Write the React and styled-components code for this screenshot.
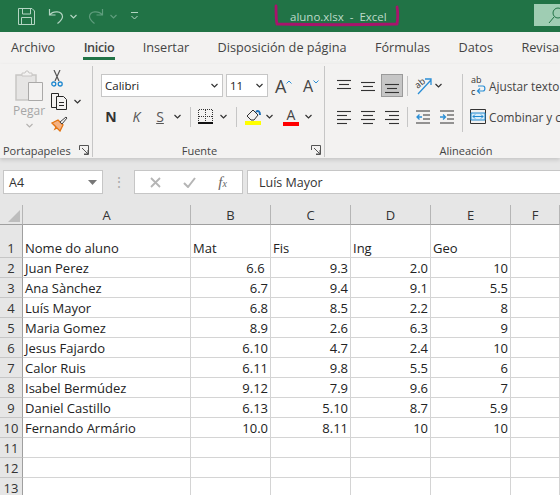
import styled, { createGlobalStyle } from "styled-components";

const GlobalStyle = createGlobalStyle`
  html, body { margin: 0; padding: 0; background: #fff; }
  body { font-family: "Open Sans", "Liberation Sans", sans-serif; }
`;

const students = [
  ["Juan Perez", "6.6\u00a0", "9.3", "2.0", "10"],
  ["Ana Sànchez", "6.7", "9.4", "9.1", "5.5"],
  ["Luís Mayor", "6.8", "8.5", "2.2", "8"],
  ["Maria Gomez", "8.9", "2.6", "6.3", "9"],
  ["Jesus Fajardo", "6.10", "4.7", "2.4", "10"],
  ["Calor Ruis", "6.11", "9.8", "5.5", "6"],
  ["Isabel Bermúdez", "9.12", "7.9", "9.6", "7"],
  ["Daniel Castillo", "6.13", "5.10", "8.7", "5.9"],
  ["Fernando Armário", "10.0", "8.11", "10", "10"],
];

const App = () => (
  <Page>
    <GlobalStyle />
    <TitleBar>
      <QuickAccess>
        <svg width="17" height="17" viewBox="0 0 17 17" fill="none" stroke="#b4d5c3">
          <path d="M.5.5h13.5l2.5 2.5v13.5H.5z" />
          <path d="M4.5.5v5.500h8V.5M3.500 16.500V9.500h10v7" />
        </svg>
        <svg width="16" height="16" viewBox="0 0 16 16" fill="none" stroke="#b4d5c3" style={{ marginLeft: 13 }}>
          <path d="M1.500 1v6h6M1.500 7C5 2.500 14 2.500 14.500 8.500 14.500 11 12 13.500 9.500 15.500" strokeWidth="1.200" />
        </svg>
        <Chevron color="#b4d5c3" style={{ marginLeft: 6 }} />
        <svg width="16" height="16" viewBox="0 0 16 16" fill="none" stroke="#5f9d7d" style={{ marginLeft: 11 }}>
          <path d="M14.500 1v6h-6M14.500 7C11 2.500 2 2.500 1.500 8.500 1.500 11 4 13.500 6.500 15.500" strokeWidth="1.200" />
        </svg>
        <Chevron color="#5f9d7d" style={{ marginLeft: 6 }} />
        <svg width="8" height="9" viewBox="0 0 8 9" fill="none" stroke="#b4d5c3" style={{ marginLeft: 14 }}>
          <path d="M0 .5h7M.5 4l3 3 3-3" />
        </svg>
      </QuickAccess>
      <FileTitle>aluno.xlsx&nbsp; - &nbsp;Excel</FileTitle>
      <SearchBox>
        <svg width="12" height="18" viewBox="0 0 12 18" fill="none" stroke="#217346">
          <circle cx="10" cy="7" r="5" />
          <path d="M6 11l-5 6" />
        </svg>
      </SearchBox>
      <TitleMark width="128" height="24" viewBox="0 0 128 24" fill="none">
        <path d="M2 2c0 8 0 14 1 18 40 1 80 1 120 0 1-6 1-12 0-17" stroke="#a8146c" strokeWidth="2.800" strokeLinecap="round" />
      </TitleMark>
    </TitleBar>

    <Tabs>
      <Tab>Archivo</Tab>
      <Tab $active>Inicio</Tab>
      <Tab>Insertar</Tab>
      <Tab>Disposición de página</Tab>
      <Tab>Fórmulas</Tab>
      <Tab>Datos</Tab>
      <Tab>Revisar</Tab>
    </Tabs>

    <Ribbon>
      <Group $width={93}>
        <ClipboardBody>
          <PasteColumn>
            <svg width="28" height="31" viewBox="0 0 28 31" fill="none">
              <path d="M1 5h20v25H1z" fill="#e6e5e4" stroke="#c8c6c4" strokeWidth="1.500" />
              <path d="M7 6V3h3l1-2h2l1 2h3v3z" fill="#f3f2f1" stroke="#c8c6c4" />
              <path d="M13.500 12.500h14v18h-14z" fill="#f3f2f1" stroke="#aaa9a8" />
            </svg>
            <PasteLabel>Pegar</PasteLabel>
            <Chevron color="#b5b3b1" />
          </PasteColumn>
          <ClipboardTools>
            <svg width="12" height="17" viewBox="0 0 12 17" fill="none">
              <path d="M3 0l5 11M9 0L4 11" stroke="#555" strokeWidth="1.200" />
              <circle cx="2.800" cy="14" r="2" stroke="#1e88d0" strokeWidth="1.300" />
              <circle cx="9.200" cy="14" r="2" stroke="#1e88d0" strokeWidth="1.300" />
            </svg>
            <CopyRow>
              <svg width="17" height="17" viewBox="0 0 17 17" fill="#f3f2f1" stroke="#262626">
                <path d="M.5.5h7v14h-7z" />
                <path d="M5.500 3.500h7l3 3v10h-10z" />
                <path d="M8 9.500h5M8 12.500h5" />
              </svg>
              <Chevron />
            </CopyRow>
            <svg width="17" height="16" viewBox="0 0 17 16" fill="none">
              <path d="M1 7l6-3 5 5-3 6-3-3-2 1 1-2z" fill="#f4b183" stroke="#e3730f" strokeWidth="1.300" />
              <path d="M9 6l6-5 1 1-5 6z" fill="#f3f2f1" stroke="#444" />
            </svg>
          </ClipboardTools>
        </ClipboardBody>
        <GroupFooter>
          <GroupLabel $left>Portapapeles</GroupLabel>
          <Launcher />
        </GroupFooter>
      </Group>

      <Group $width={232}>
        <ToolRows>
          <ToolRow>
            <ComboBox $width={122}>
              Calibri
              <Chevron />
            </ComboBox>
            <ComboBox $width={42}>
              11
              <Chevron />
            </ComboBox>
            <SizeButton $large>
              A
              <svg width="6" height="4" viewBox="0 0 6 4" fill="none" stroke="#2b8fd6">
                <path d="M.5 3.500L3 1l2.500 2.500" />
              </svg>
            </SizeButton>
            <SizeButton>
              A
              <svg width="6" height="4" viewBox="0 0 6 4" fill="none" stroke="#2b8fd6">
                <path d="M.5.500L3 3 5.500.5" />
              </svg>
            </SizeButton>
          </ToolRow>
          <FormatRow>
            <StyleLetter $width={30} $weight={700}>N</StyleLetter>
            <StyleLetter $width={21} $italic>K</StyleLetter>
            <StyleLetter $width={26} $underline>S</StyleLetter>
            <ChevronSlot $width={8}><Chevron /></ChevronSlot>
            <Divider $left={9} $right={3} />
            <IconSlot>
              <svg width="15" height="15" viewBox="0 0 15 15" fill="none" stroke="#333" shapeRendering="crispEdges">
                <path d="M.5.500h14M.5.500v13M14.500.500v13M7.500.500v13M.5 7h14" strokeDasharray="1 1" />
                <path d="M0 14h15" stroke="#111" strokeWidth="1.500" />
              </svg>
            </IconSlot>
            <ChevronSlot $width={14}><Chevron /></ChevronSlot>
            <Divider $left={6} $right={4} />
            <IconSlot $width={24}>
              <ColorTool>
                <svg width="15" height="12" viewBox="0 0 15 12" fill="none">
                  <path d="M1 7l6-6 5 5-4 5H5z" fill="#f3f2f1" stroke="#333" />
                  <path d="M10 3c2-2 4-1 4 3" stroke="#1c6fb8" strokeWidth="2" />
                </svg>
                <ColorBar $color="#ffff00" />
              </ColorTool>
            </IconSlot>
            <ChevronSlot $width={8} $after={6}><Chevron /></ChevronSlot>
            <IconSlot $width={24}>
              <ColorTool>
                <FontColorLetter>A</FontColorLetter>
                <ColorBar $color="#ff0000" />
              </ColorTool>
            </IconSlot>
            <ChevronSlot $width={10}><Chevron /></ChevronSlot>
          </FormatRow>
        </ToolRows>
        <GroupFooter>
          <GroupLabel $shift={9}>Fuente</GroupLabel>
          <Launcher />
        </GroupFooter>
      </Group>

      <Group $width={280} $plain>
        <AlignBody>
          <AlignGrid>
            <AlignButton><Lines rows={[[0, 14, 2], [2, 12, 6], [0, 14, 10]]} /></AlignButton>
            <AlignButton><Lines rows={[[0, 14, 4], [2, 12, 8], [0, 14, 12]]} /></AlignButton>
            <AlignButton $selected><Lines rows={[[0, 14, 6], [2, 12, 10], [0, 14, 14]]} /></AlignButton>
            <AlignDivider />
            <OrientationCell>
              <svg width="18" height="18" viewBox="0 0 18 18" fill="none">
                <text x="1" y="9" fontSize="9" fill="#333" fontFamily="Open Sans" transform="rotate(-40 6 8)">ab</text>
                <path d="M3 17L16 3M10 2h6v6" stroke="#2b8fd6" strokeWidth="1.300" />
              </svg>
              <Chevron />
            </OrientationCell>
            <AlignButton><Lines rows={[[0, 14, 2], [0, 10, 6], [0, 14, 10], [0, 10, 14]]} /></AlignButton>
            <AlignButton><Lines rows={[[0, 14, 2], [2, 12, 6], [0, 14, 10], [2, 12, 14]]} /></AlignButton>
            <AlignButton><Lines rows={[[0, 14, 2], [4, 14, 6], [0, 14, 10], [4, 14, 14]]} /></AlignButton>
            <AlignDivider />
            <IndentCell>
              <svg width="14" height="14" viewBox="0 0 14 14" fill="none">
                <path d="M0 1h14M7 5h7M7 9h7M0 13h14" stroke="#333" />
                <path d="M1 7h5M3.500 4.500L1 7l2.500 2.500" stroke="#2b8fd6" strokeWidth="1.300" />
              </svg>
              <svg width="14" height="14" viewBox="0 0 14 14" fill="none">
                <path d="M0 1h14M7 5h7M7 9h7M0 13h14" stroke="#333" />
                <path d="M0 7h5M3 4.500L5.500 7 3 9.500" stroke="#2b8fd6" strokeWidth="1.300" />
              </svg>
            </IndentCell>
          </AlignGrid>
          <Divider $tall />
          <WrapColumn>
            <WrapRow>
              <WrapIcon>
                <svg width="16" height="22" viewBox="0 0 16 22" fill="none">
                  <text x="1" y="8" fontSize="9" fill="#333" fontFamily="Open Sans">ab</text>
                  <text x="1" y="20" fontSize="9" fill="#333" fontFamily="Open Sans">c</text>
                  <path d="M8 16h5c2.500 0 2.500-5 0-5H8M10 13.500L7.500 16l2.500 2.500" stroke="#2b8fd6" strokeWidth="1.200" />
                </svg>
              </WrapIcon>
              Ajustar texto
            </WrapRow>
            <WrapRow>
              <WrapIcon>
                <svg width="16" height="15" viewBox="0 0 16 15" fill="none">
                  <path d="M.5.500h15v14H.5z" fill="#f3f2f1" stroke="#333" />
                  <path d="M1 4h14v7H1z" fill="#d9ecf8" stroke="#1e88d0" />
                  <path d="M3 7.500h10M5 5.500l-2 2 2 2M11 5.500l2 2-2 2" stroke="#1e88d0" />
                </svg>
              </WrapIcon>
              Combinar y centrar
            </WrapRow>
          </WrapColumn>
        </AlignBody>
        <GroupFooter $plain>
          <GroupLabel>Alineación</GroupLabel>
        </GroupFooter>
      </Group>
    </Ribbon>

    <FormulaBar>
      <NameBox>
        A4
        <svg width="9" height="5" viewBox="0 0 9 5" fill="#777"><path d="M0 0h9L4.500 5z" /></svg>
      </NameBox>
      <Grip>⋮</Grip>
      <FxBox>
        <svg width="11" height="11" viewBox="0 0 11 11" fill="none" stroke="#b5b5b5" strokeWidth="1.800">
          <path d="M1 1l9 9M10 1l-9 9" />
        </svg>
        <svg width="13" height="11" viewBox="0 0 13 11" fill="none" stroke="#b5b5b5" strokeWidth="2">
          <path d="M1 6l4 4 7-9" />
        </svg>
        <FxFunction><i>f</i><small><i>x</i></small></FxFunction>
      </FxBox>
      <FormulaInput>Luís Mayor</FormulaInput>
    </FormulaBar>

    <Sheet>
      <Corner>
        <svg width="12" height="12" viewBox="0 0 12 12" fill="#bdbdbd"><path d="M12 0v12H0z" /></svg>
      </Corner>
      {["A", "B", "C", "D", "E", "F"].map((letter) => (
        <ColumnHead key={letter}>{letter}</ColumnHead>
      ))}

      <RowHead>1</RowHead>
      <Cell>Nome do aluno</Cell>
      <Cell>Mat</Cell>
      <Cell>Fis</Cell>
      <Cell>Ing</Cell>
      <Cell>Geo</Cell>
      <Cell />

      {students.map((row, i) => (
        <SheetRow key={row[0]} number={i + 2} values={row} />
      ))}
      {[11, 12, 13].map((n) => (
        <SheetRow key={n} number={n} values={["", "", "", "", ""]} />
      ))}
    </Sheet>
  </Page>
);

const SheetRow = ({ number, values }) => (
  <>
    <RowHead>{number}</RowHead>
    {values.map((value, i) => (
      <Cell key={i} $number={i > 0}>{value}</Cell>
    ))}
    <Cell />
  </>
);

const Chevron = ({ color = "#333", style }) => (
  <svg width="7" height="5" viewBox="0 0 7 5" fill="none" stroke={color} strokeWidth="1.200" style={style}>
    <path d="M.5 1l3 3 3-3" />
  </svg>
);

const Launcher = () => (
  <LauncherIcon width="10" height="10" viewBox="0 0 10 10" fill="none" stroke="#555">
    <path d="M.5 5V.5h9v9H5M3 3l6 6M9 5v4H5" />
  </LauncherIcon>
);

const Lines = ({ rows }) => (
  <svg width="14" height="16" viewBox="0 0 14 16" stroke="#333" strokeWidth="1.100">
    {rows.map(([x1, x2, y]) => (
      <path key={y} d={`M${x1} ${y + 0.5}H${x2}`} />
    ))}
  </svg>
);

export default App;

const Page = styled.div`
  width: 560px;
  height: 495px;
  overflow: hidden;
  display: flex;
  flex-direction: column;
  background: #e6e6e6;
`;

const TitleBar = styled.header`
  position: relative;
  height: 32px;
  flex: none;
  display: flex;
  align-items: center;
  background: #217346;
  padding-left: 18px;
`;

const QuickAccess = styled.div`
  display: flex;
  align-items: center;
`;

const FileTitle = styled.div`
  margin-left: 151px;
  color: #bcdac9;
  font-size: 11.500px;
  white-space: nowrap;
`;

const SearchBox = styled.div`
  position: absolute;
  right: 0;
  top: 4px;
  width: 26px;
  height: 22px;
  background: #9fcdb3;
  display: flex;
  justify-content: flex-end;
  align-items: center;
`;

const TitleMark = styled.svg`
  position: absolute;
  left: 274px;
  top: 4px;
`;

const Tabs = styled.nav`
  height: 32px;
  flex: none;
  display: flex;
  gap: 28.400px;
  padding-left: 11px;
  background: #f3f2f1;
  white-space: nowrap;
`;

const Tab = styled.div`
  position: relative;
  line-height: 31px;
  font-size: 12.700px;
  font-weight: ${(p) => (p.$active ? 600 : 400)};
  letter-spacing: ${(p) => (p.$active ? "-0.4px" : "0")};
  color: #444;
  ${(p) =>
    p.$active &&
    `&::after {
      content: "";
      position: absolute;
      left: -1px;
      right: -1px;
      bottom: 4px;
      height: 3px;
      background: #217346;
    }`}
`;

const Ribbon = styled.section`
  height: 94px;
  flex: none;
  display: flex;
  padding-top: 2px;
  box-sizing: border-box;
  background: #f3f2f1;
  box-shadow: 0 2px 4px rgba(0, 0, 0, 0.14);
  position: relative;
  font-size: 12px;
  color: #444;
`;

const Group = styled.div`
  flex: none;
  width: ${(p) => p.$width}px;
  height: 91px;
  box-sizing: border-box;
  display: flex;
  flex-direction: column;
  border-right: ${(p) => (p.$plain ? "none" : "1px solid #c6c6c6")};
`;

const GroupFooter = styled.div`
  margin-top: auto;
  height: 14px;
  display: flex;
  align-items: center;
  justify-content: ${(p) => (p.$plain ? "center" : "space-between")};
  padding: 0 1px 0 3px;
`;

const GroupLabel = styled.span`
  font-size: 11px;
  color: #444;
  margin: ${(p) => (p.$left ? "0 auto 0 0" : `0 auto`)};
  position: relative;
  left: ${(p) => (p.$shift ? -p.$shift + 5 : 0)}px;
  white-space: nowrap;
`;

const LauncherIcon = styled.svg`
  flex: none;
  margin: 0 2px 0 0;
`;

const ClipboardBody = styled.div`
  display: flex;
  padding: 4px 0 0 15px;
`;

const PasteColumn = styled.div`
  width: 28px;
  display: flex;
  flex-direction: column;
  align-items: center;
  gap: 4px;
`;

const PasteLabel = styled.span`
  color: #a6a6a6;
  font-size: 12px;
  line-height: 16px;
  margin-top: -2px;
`;

const ClipboardTools = styled.div`
  margin-left: 8px;
  display: flex;
  flex-direction: column;
  align-items: flex-start;
  gap: 6px;
`;

const CopyRow = styled.div`
  display: flex;
  align-items: center;
  gap: 6px;
`;

const ToolRows = styled.div`
  display: flex;
  flex-direction: column;
  gap: 8px;
  padding-top: 8px;
`;

const ToolRow = styled.div`
  height: 23px;
  display: flex;
  align-items: center;
  gap: 3px;
  padding-left: 8px;
`;

const FormatRow = styled.div`
  height: 23px;
  display: flex;
  align-items: center;
  padding-left: 3px;
`;

const ComboBox = styled.div`
  width: ${(p) => p.$width}px;
  height: 23px;
  box-sizing: border-box;
  border: 1px solid #c6c6c6;
  background: #fff;
  padding: 0 4px 0 3px;
  display: flex;
  align-items: center;
  justify-content: space-between;
  color: #222;
  font-size: 11.500px;
`;

const SizeButton = styled.div`
  width: ${(p) => (p.$large ? 25 : 24)}px;
  display: flex;
  padding-left: 4px;
  box-sizing: border-box;
  font-size: ${(p) => (p.$large ? 18 : 16)}px;
  line-height: 22px;
  color: #444;
  svg { margin-top: 5px; flex: none; }
`;

const StyleLetter = styled.div`
  width: ${(p) => p.$width}px;
  text-align: center;
  font-size: 14px;
  color: ${(p) => (p.$weight ? "#333" : "#555")};
  font-weight: ${(p) => p.$weight || 400};
  font-style: ${(p) => (p.$italic ? "italic" : "normal")};
  text-decoration: ${(p) => (p.$underline ? "underline" : "none")};
`;

const ChevronSlot = styled.div`
  flex: none;
  width: ${(p) => p.$width}px;
  margin-right: ${(p) => p.$after || 0}px;
  display: flex;
  justify-content: center;
`;

const Divider = styled.div`
  flex: none;
  width: 1px;
  height: ${(p) => (p.$tall ? 58 : 20)}px;
  background: #c6c6c6;
  margin: 0 ${(p) => p.$right || 0}px 0 ${(p) => p.$left || 0}px;
`;

const IconSlot = styled.div`
  flex: none;
  width: ${(p) => p.$width || 22}px;
  display: flex;
  justify-content: center;
`;

const ColorTool = styled.div`
  width: 16px;
  display: flex;
  flex-direction: column;
  align-items: center;
`;

const ColorBar = styled.div`
  width: 16px;
  height: 4px;
  background: ${(p) => p.$color};
`;

const FontColorLetter = styled.span`
  font-size: 14px;
  line-height: 15px;
  color: #444;
`;

const AlignBody = styled.div`
  display: flex;
  padding: 8px 0 0 8px;
`;

const AlignGrid = styled.div`
  width: 129px;
  display: grid;
  grid-template-columns: 24px 24px 24px 5px 52px;
  grid-auto-rows: 23px;
  row-gap: 8px;
  align-items: center;
`;

const AlignButton = styled.div`
  width: 22px;
  height: 23px;
  box-sizing: border-box;
  display: flex;
  align-items: center;
  justify-content: center;
  ${(p) => p.$selected && "background: #c6c6c6; border: 1px solid #9a9a9a;"}
`;

const AlignDivider = styled.div`
  width: 1px;
  height: 20px;
  justify-self: center;
  background: #c6c6c6;
`;

const OrientationCell = styled.div`
  display: flex;
  align-items: center;
  gap: 2px;
  padding-left: 5px;
`;

const IndentCell = styled.div`
  display: flex;
  gap: 10px;
  padding-left: 6px;
`;

const WrapColumn = styled.div`
  display: flex;
  flex-direction: column;
  gap: 8px;
  padding-left: 7px;
  white-space: nowrap;
`;

const WrapRow = styled.div`
  height: 23px;
  display: flex;
  align-items: center;
  gap: 3px;
  font-size: 11.800px;
  color: #444;
`;

const WrapIcon = styled.div`
  width: 16px;
  display: flex;
`;

const FormulaBar = styled.div`
  height: 47px;
  flex: none;
  box-sizing: border-box;
  display: flex;
  padding: 12px 0 11px 3px;
  background: #e6e6e6;
`;

const NameBox = styled.div`
  width: 100px;
  box-sizing: border-box;
  background: #fff;
  border: 1px solid #c6c6c6;
  display: flex;
  align-items: center;
  justify-content: space-between;
  padding: 0 5px 0 5px;
  font-size: 12.500px;
  color: #333;
`;

const Grip = styled.div`
  width: 31px;
  text-align: center;
  color: #aaa;
  font-size: 14px;
  line-height: 24px;
`;

const FxBox = styled.div`
  width: 109px;
  box-sizing: border-box;
  background: #fff;
  border: 1px solid #c6c6c6;
  display: flex;
  align-items: center;
  justify-content: space-around;
  padding: 0 4px;
`;

const FxFunction = styled.span`
  font-family: "Liberation Serif", serif;
  font-size: 15px;
  color: #666;
  small { font-size: 10px; }
`;

const FormulaInput = styled.div`
  flex: 1;
  margin-left: 4px;
  box-sizing: border-box;
  background: #fff;
  border: 1px solid #c6c6c6;
  border-right: none;
  padding-left: 11px;
  line-height: 23px;
  font-size: 12.500px;
  color: #333;
`;

const Sheet = styled.main`
  display: grid;
  grid-template-columns: 23px 168px 80px 80px 80px 80px 1fr;
  grid-auto-rows: 20px;
  grid-template-rows: 20px 33px;
  background: #fff;
  font-size: 13px;
  color: #222;
`;

const Corner = styled.div`
  background: #e6e6e6;
  box-sizing: border-box;
  border-right: 1px solid #b5b5b5;
  border-bottom: 1px solid #9f9f9f;
  display: flex;
  align-items: flex-end;
  justify-content: flex-end;
  padding: 0 2px 2px 0;
`;

const ColumnHead = styled.div`
  background: #e6e6e6;
  box-sizing: border-box;
  border-right: 1px solid #b5b5b5;
  border-bottom: 1px solid #9f9f9f;
  text-align: center;
  line-height: 20px;
  color: #333;
`;

const RowHead = styled.div`
  background: #e6e6e6;
  box-sizing: border-box;
  border-right: 1px solid #9f9f9f;
  border-bottom: 1px solid #c6c6c6;
  display: flex;
  align-items: flex-end;
  justify-content: center;
  line-height: 17px;
  color: #333;
`;

const Cell = styled.div`
  box-sizing: border-box;
  border-right: 1px solid #d4d4d4;
  border-bottom: 1px solid #d4d4d4;
  display: flex;
  align-items: flex-end;
  justify-content: ${(p) => (p.$number ? "flex-end" : "flex-start")};
  padding: 0 2px;
  line-height: 17px;
  white-space: nowrap;
  overflow: hidden;
`;
